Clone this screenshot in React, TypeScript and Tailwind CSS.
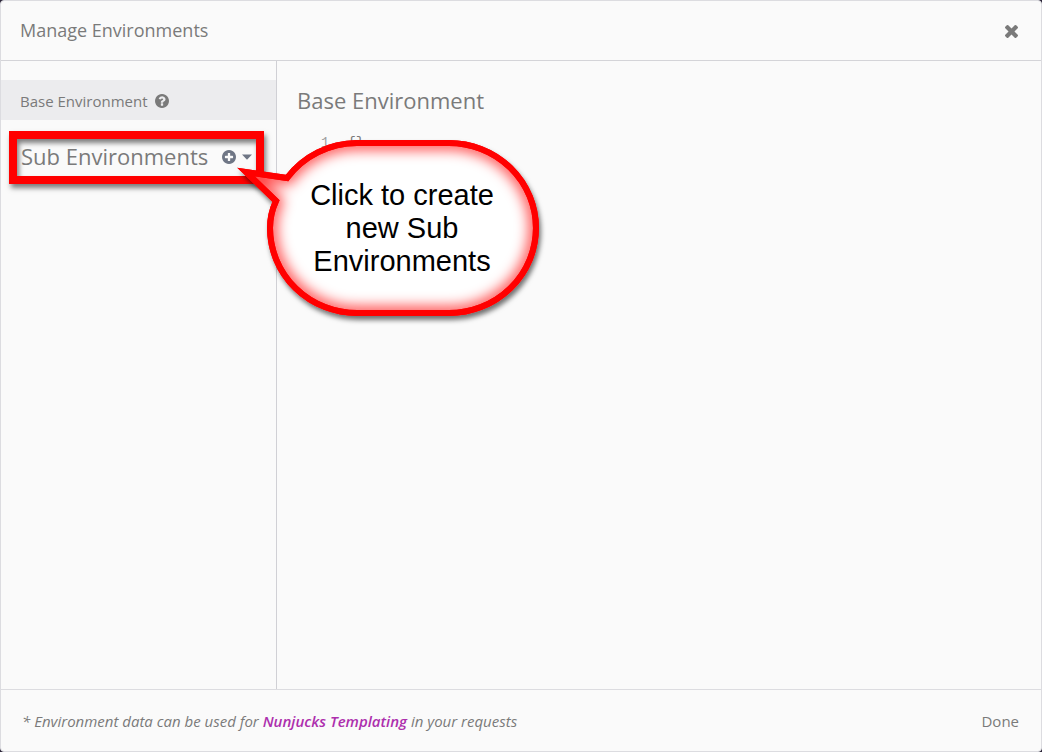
import type { ReactNode } from "react";

const DISC =
  "M1664 896q0 209-103 385.5t-279.5 279.5-385.5 103-385.5-103-279.5-279.5-103-385.5 103-385.5 279.5-279.5 385.5-103 385.5 103 279.5 279.5 103 385.5z";

function Icon({ className, viewBox, children }: { className: string; viewBox: string; children: ReactNode }) {
  return (
    <svg className={className} viewBox={viewBox} fill="currentColor" aria-hidden="true">
      {children}
    </svg>
  );
}

function CloseIcon() {
  return (
    <Icon className="size-[13px]" viewBox="302 302 1188 1188">
      <path d="M1490 1322q0 40-28 68l-136 136q-28 28-68 28t-68-28l-294-294-294 294q-28 28-68 28t-68-28l-136-136q-28-28-28-68t28-68l294-294-294-294q-28-28-28-68t28-68l136-136q28-28 68-28t68 28l294 294 294-294q28-28 68-28t68 28l136 136q28 28 28 68t-28 68l-294 294 294 294q28 28 28 68z" transform="translate(0 -64)" />
    </Icon>
  );
}

function HelpIcon() {
  return (
    <Icon className="size-3.5" viewBox="128 128 1536 1536">
      <path
        fillRule="evenodd"
        d={
          "M1024 1376v-192q0-14-9-23t-23-9h-192q-14 0-23 9t-9 23v192q0 14 9 23t23 9h192q14 0 23-9t9-23zm256-672q0-88-55.5-163t-138.5-116-170-41q-243 0-371 213-15 24 8 42l132 100q7 6 19 6 16 0 25-12 53-68 86-92 34-24 86-24 48 0 85.5 26t37.5 59q0 38-20 61t-68 45q-63 28-115.5 86.5t-52.5 125.5v36q0 14 9 23t23 9h192q14 0 23-9t9-23q0-19 21.5-49.5t54.5-49.5q32-18 49-28.5t46-35 44.5-48 28-60.5 12.5-81z" +
          DISC
        }
      />
    </Icon>
  );
}

function PlusIcon() {
  return (
    <Icon className="size-3.5" viewBox="128 128 1536 1536">
      <path
        fillRule="evenodd"
        d={
          "M1344 960v-128q0-26-19-45t-45-19h-256v-256q0-26-19-45t-45-19h-128q-26 0-45 19t-19 45v256h-256q-26 0-45 19t-19 45v128q0 26 19 45t45 19h256v256q0 26 19 45t45 19h128q26 0 45-19t19-45v-256h256q26 0 45-19t19-45z" +
          DISC
        }
      />
    </Icon>
  );
}

const BUBBLE =
  "M61 38 L20 32 L50 61 Q44 74 44 88 A87 85 0 0 0 131 173 H223 A87 85 0 0 0 223 3 H131 A87 85 0 0 0 61 38 Z";

function Callout() {
  return (
    <div className="absolute top-[9px] left-[225px] z-10 h-[176px] w-[312px]">
      <svg className="absolute inset-0 size-full overflow-visible" viewBox="0 0 312 176" aria-hidden="true">
        <defs>
          <clipPath id="bubble-clip">
            <path d={BUBBLE} />
          </clipPath>
          <filter id="bubble-glow" x="-20%" y="-20%" width="140%" height="140%">
            <feGaussianBlur stdDeviation="7" />
          </filter>
          <filter id="bubble-shadow" x="-20%" y="-20%" width="140%" height="140%">
            <feDropShadow dx="2" dy="4" stdDeviation="2.5" floodColor="#000" floodOpacity="0.55" />
          </filter>
        </defs>
        <path d={BUBBLE} fill="#fff" stroke="#f00" strokeWidth="6" strokeMiterlimit="10" filter="url(#bubble-shadow)" />
        <g clipPath="url(#bubble-clip)">
          <path d={BUBBLE} fill="none" stroke="#f00" strokeWidth="12" strokeOpacity="0.8" filter="url(#bubble-glow)" />
        </g>
        <path d={BUBBLE} fill="none" stroke="#f00" strokeWidth="6" strokeMiterlimit="10" />
      </svg>
      <p className="relative mt-[39px] ml-[76px] w-[200px] text-center font-['Liberation_Sans',sans-serif] text-[29px] leading-[33px] text-black">
        Click to create new Sub Environments
      </p>
    </div>
  );
}

export default function App() {
  return (
    <div className="min-h-screen bg-[#2b2438] font-['Open_Sans','Noto_Sans',sans-serif] text-[#7a7a7a]">
      <section
        aria-labelledby="dialog-title"
        className="flex min-h-screen flex-col rounded border border-[#dcdce0] bg-[#fafafa]"
      >
        <header className="flex h-[60px] items-center justify-between border-b border-[#d4d4d8] px-[19px]">
          <h1 id="dialog-title" className="pb-0.5 text-lg">
            Manage Environments
          </h1>
          <button type="button" aria-label="Close" className="p-1 pt-1.5">
            <CloseIcon />
          </button>
        </header>

        <main className="flex grow">
          <aside className="w-[276px] shrink-0 border-r border-[#d0d0d5] pt-[19px]">
            <button type="button" className="flex h-10 w-full items-center gap-[7px] bg-[#ececee] px-[19px] pt-0.5 text-[15px]">
              Base Environment
              <HelpIcon />
            </button>
            <div className="relative mt-[11px] flex h-[53px] items-center pb-0.5 pl-5">
              <h2 className="grow text-[22px]">Sub Environments</h2>
              <button type="button" aria-label="New sub environment" className="flex items-center gap-1.5 pr-6 text-[#6f7685]">
                <PlusIcon />
                <svg className="h-[6px] w-[10px]" viewBox="0 0 10 6" fill="currentColor" aria-hidden="true">
                  <path d="M0 0.5H10L5 5.7Z" />
                </svg>
              </button>
              <div className="pointer-events-none absolute inset-y-0 right-3 left-2 border-8 border-[#f00] shadow-[2px_4px_5px_rgba(0,0,0,0.5),inset_2px_4px_5px_rgba(0,0,0,0.5)]" />
              <div className="absolute inset-x-0 top-0">
                <Callout />
              </div>
            </div>
          </aside>

          <section className="min-w-0 grow px-5 pt-[23px]">
            <h2 className="text-[22px] leading-8">Base Environment</h2>
            <div className="mt-[17px] flex gap-[18px] pl-6 font-['Liberation_Mono',monospace] text-sm leading-5">
              <span className="text-[#a0a0a0]">1</span>
              <code className="font-['Liberation_Mono',monospace]">{"{}"}</code>
            </div>
          </section>
        </main>

        <footer className="flex h-[62px] items-center justify-between border-t border-[#dcdce0] pt-0.5 pr-[22px] pl-[21px]">
          <p className="text-[15px] italic">
            * Environment data can be used for{" "}
            <a href="#templating" className="font-semibold text-[#ad2fad]">
              Nunjucks Templating
            </a>{" "}
            in your requests
          </p>
          <button type="button" className="text-[15px]">
            Done
          </button>
        </footer>
      </section>
    </div>
  );
}
